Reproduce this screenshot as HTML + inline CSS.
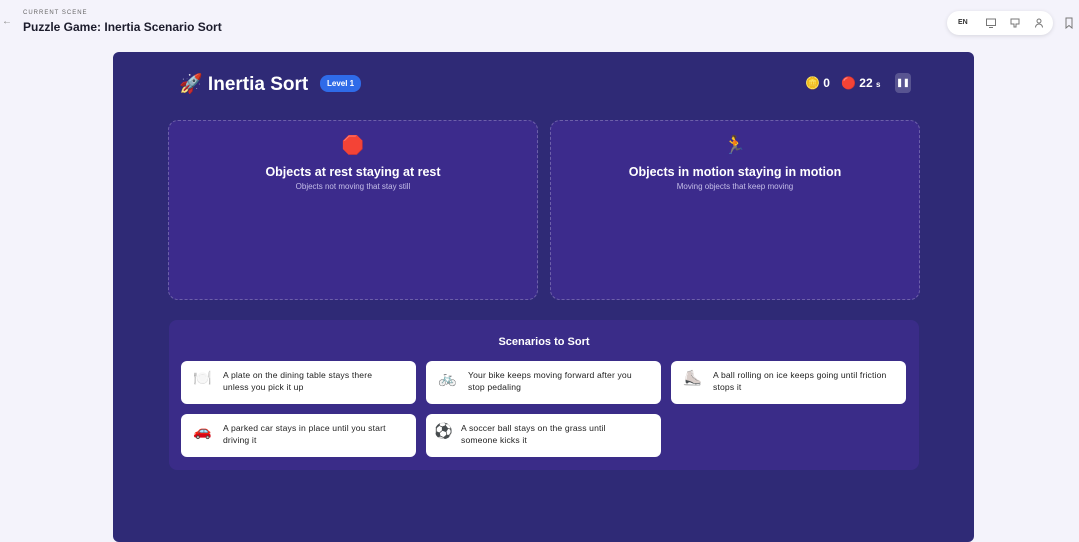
<!DOCTYPE html>
<html><head><meta charset="utf-8"><style>
*{box-sizing:border-box;margin:0;padding:0}
body{width:1079px;height:534px;overflow:hidden;background:#f4f3fb;font-family:"Liberation Sans",sans-serif;position:relative}
.hdr-s{position:absolute;left:23px;top:10px;font-size:6px;letter-spacing:1px;color:#666}
.hdr-t{position:absolute;left:23px;top:20px;font-size:12px;font-weight:bold;color:#1c1c2c}
.back{position:absolute;left:2px;top:16px;font-size:10px;color:#888}
.tb{position:absolute;left:947px;top:11px;width:106px;height:24px;background:#fff;border-radius:12px;box-shadow:0 1px 4px rgba(0,0,0,.12);font-size:7px;font-weight:bold;color:#333}
.panel{position:absolute;left:113px;top:52px;width:861px;height:490px;background:#2f2a76;border-radius:6px}
.zone{position:absolute;top:68px;width:370px;height:180px;background:#3c2b8c;border:1px dashed rgba(255,255,255,.25);border-radius:10px;text-align:center;color:#fff}
.zone h3{font-size:12.5px;margin-top:44px}
.zone p{font-size:8px;color:#c4bde8;margin-top:3px}
.zone .ic{position:absolute;left:50%;top:14px;transform:translateX(-50%);font-size:18px}
.sort{position:absolute;left:56px;top:268px;width:750px;height:150px;background:#3a2c88;border-radius:8px}
.card{position:absolute;width:235px;height:43px;background:#fff;border-radius:6px;font-size:8.6px;letter-spacing:.15px;color:#222;line-height:11.5px;padding:9px 18px 0 42px}
.card .e{position:absolute;left:12px;top:12px;font-size:15px}
</style></head><body>
<div class="back">←</div>
<div class="hdr-s">CURRENT SCENE</div>
<div class="hdr-t">Puzzle Game: Inertia Scenario Sort</div>
<div class="tb"><span style="position:absolute;left:11px;top:8px">EN</span>
<svg style="position:absolute;left:38px;top:6px" width="12" height="12" viewBox="0 0 12 12" fill="none" stroke="#777"><rect x="1.5" y="2" width="9" height="6.5"/><path d="M4 10.5h4"/></svg>
<svg style="position:absolute;left:62px;top:6px" width="12" height="12" viewBox="0 0 12 12" fill="none" stroke="#777"><path d="M2 2h8v5H7v3H5V7H2z"/></svg>
<svg style="position:absolute;left:86px;top:6px" width="12" height="12" viewBox="0 0 12 12" fill="none" stroke="#777"><circle cx="6" cy="4" r="2"/><path d="M2.5 10.5c0-2 1.5-3.5 3.5-3.5s3.5 1.5 3.5 3.5"/></svg>
</div>
<svg style="position:absolute;left:1064px;top:17px" width="10" height="12" viewBox="0 0 10 12" fill="none" stroke="#777"><path d="M2 1h6v10L5 8.5 2 11z"/></svg>
<div class="panel">
<div style="position:absolute;left:66px;top:20px;color:#fff;font-size:19px;font-weight:bold">🚀 Inertia Sort</div>
<div style="position:absolute;left:207px;top:23px;background:#2f6be8;color:#fff;font-size:8px;font-weight:bold;padding:4px 7px;border-radius:8px">Level 1</div>
<div style="position:absolute;left:692px;top:24px;color:#fff;font-size:12px;font-weight:bold">🪙 0</div>
<div style="position:absolute;left:728px;top:24px;color:#fff;font-size:12px;font-weight:bold">🔴 22 <span style="font-size:8px">s</span></div>
<div style="position:absolute;left:782px;top:21px;width:16px;height:20px;background:rgba(255,255,255,.2);border-radius:4px;color:#fff;font-size:8px;text-align:center;line-height:20px;font-weight:bold">❚❚</div>
<div class="zone" style="left:55px"><div class="ic">🛑</div><h3>Objects at rest staying at rest</h3><p>Objects not moving that stay still</p></div>
<div class="zone" style="left:437px"><div class="ic">🏃</div><h3>Objects in motion staying in motion</h3><p>Moving objects that keep moving</p></div>
<div class="sort">
<div style="position:absolute;left:0;width:100%;top:16px;text-align:center;color:#fff;font-size:11px;font-weight:bold">Scenarios to Sort</div>
<div class="card" style="left:12px;top:41px"><span class="e">🍽️</span>A plate on the dining table stays there unless you pick it up</div>
<div class="card" style="left:257px;top:41px"><span class="e">🚲</span>Your bike keeps moving forward after you stop pedaling</div>
<div class="card" style="left:502px;top:41px"><span class="e">⛸️</span>A ball rolling on ice keeps going until friction stops it</div>
<div class="card" style="left:12px;top:94px"><span class="e">🚗</span>A parked car stays in place until you start driving it</div>
<div class="card" style="left:257px;top:94px;padding-left:35px"><span class="e" style="left:8px">⚽</span>A soccer ball stays on the grass until someone kicks it</div>
</div>
</div>
</body></html>
